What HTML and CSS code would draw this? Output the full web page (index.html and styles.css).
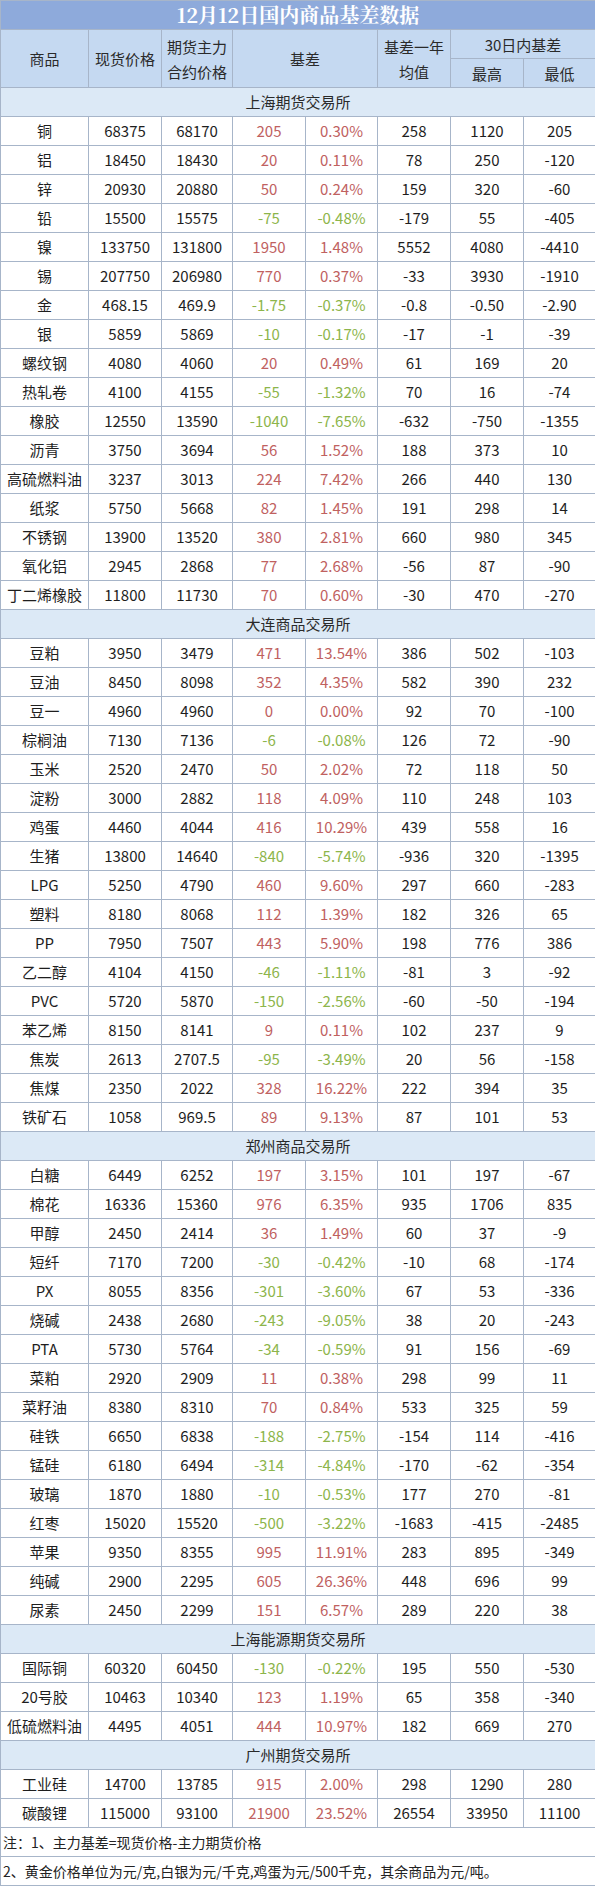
FILE: index.html
```html
<!DOCTYPE html>
<html lang="zh">
<head>
<meta charset="utf-8">
<title>12月12日国内商品基差数据</title>
<link rel="stylesheet" href="styles.css">
</head>
<body>
<table class="basis">
<colgroup>
<col class="c1"><col class="c2"><col class="c3"><col class="c4"><col class="c5"><col class="c6"><col class="c7"><col class="c8">
</colgroup>
<thead>
<tr class="title"><th colspan="8">12月12日国内商品基差数据</th></tr>
<tr class="head"><th rowspan="2">商品</th><th rowspan="2">现货价格</th><th rowspan="2">期货主力<br>合约价格</th><th rowspan="2" colspan="2">基差</th><th rowspan="2">基差一年<br>均值</th><th colspan="2">30日内基差</th></tr>
<tr class="head"><th>最高</th><th>最低</th></tr>
</thead>
<tbody>
<tr class="sec"><td colspan="8">上海期货交易所</td></tr>
<tr><td>铜</td><td>68375</td><td>68170</td><td class="u">205</td><td class="u">0.30%</td><td>258</td><td>1120</td><td>205</td></tr>
<tr><td>铝</td><td>18450</td><td>18430</td><td class="u">20</td><td class="u">0.11%</td><td>78</td><td>250</td><td>-120</td></tr>
<tr><td>锌</td><td>20930</td><td>20880</td><td class="u">50</td><td class="u">0.24%</td><td>159</td><td>320</td><td>-60</td></tr>
<tr><td>铅</td><td>15500</td><td>15575</td><td class="d">-75</td><td class="d">-0.48%</td><td>-179</td><td>55</td><td>-405</td></tr>
<tr><td>镍</td><td>133750</td><td>131800</td><td class="u">1950</td><td class="u">1.48%</td><td>5552</td><td>4080</td><td>-4410</td></tr>
<tr><td>锡</td><td>207750</td><td>206980</td><td class="u">770</td><td class="u">0.37%</td><td>-33</td><td>3930</td><td>-1910</td></tr>
<tr><td>金</td><td>468.15</td><td>469.9</td><td class="d">-1.75</td><td class="d">-0.37%</td><td>-0.8</td><td>-0.50</td><td>-2.90</td></tr>
<tr><td>银</td><td>5859</td><td>5869</td><td class="d">-10</td><td class="d">-0.17%</td><td>-17</td><td>-1</td><td>-39</td></tr>
<tr><td>螺纹钢</td><td>4080</td><td>4060</td><td class="u">20</td><td class="u">0.49%</td><td>61</td><td>169</td><td>20</td></tr>
<tr><td>热轧卷</td><td>4100</td><td>4155</td><td class="d">-55</td><td class="d">-1.32%</td><td>70</td><td>16</td><td>-74</td></tr>
<tr><td>橡胶</td><td>12550</td><td>13590</td><td class="d">-1040</td><td class="d">-7.65%</td><td>-632</td><td>-750</td><td>-1355</td></tr>
<tr><td>沥青</td><td>3750</td><td>3694</td><td class="u">56</td><td class="u">1.52%</td><td>188</td><td>373</td><td>10</td></tr>
<tr><td>高硫燃料油</td><td>3237</td><td>3013</td><td class="u">224</td><td class="u">7.42%</td><td>266</td><td>440</td><td>130</td></tr>
<tr><td>纸浆</td><td>5750</td><td>5668</td><td class="u">82</td><td class="u">1.45%</td><td>191</td><td>298</td><td>14</td></tr>
<tr><td>不锈钢</td><td>13900</td><td>13520</td><td class="u">380</td><td class="u">2.81%</td><td>660</td><td>980</td><td>345</td></tr>
<tr><td>氧化铝</td><td>2945</td><td>2868</td><td class="u">77</td><td class="u">2.68%</td><td>-56</td><td>87</td><td>-90</td></tr>
<tr><td>丁二烯橡胶</td><td>11800</td><td>11730</td><td class="u">70</td><td class="u">0.60%</td><td>-30</td><td>470</td><td>-270</td></tr>
<tr class="sec"><td colspan="8">大连商品交易所</td></tr>
<tr><td>豆粕</td><td>3950</td><td>3479</td><td class="u">471</td><td class="u">13.54%</td><td>386</td><td>502</td><td>-103</td></tr>
<tr><td>豆油</td><td>8450</td><td>8098</td><td class="u">352</td><td class="u">4.35%</td><td>582</td><td>390</td><td>232</td></tr>
<tr><td>豆一</td><td>4960</td><td>4960</td><td class="u">0</td><td class="u">0.00%</td><td>92</td><td>70</td><td>-100</td></tr>
<tr><td>棕榈油</td><td>7130</td><td>7136</td><td class="d">-6</td><td class="d">-0.08%</td><td>126</td><td>72</td><td>-90</td></tr>
<tr><td>玉米</td><td>2520</td><td>2470</td><td class="u">50</td><td class="u">2.02%</td><td>72</td><td>118</td><td>50</td></tr>
<tr><td>淀粉</td><td>3000</td><td>2882</td><td class="u">118</td><td class="u">4.09%</td><td>110</td><td>248</td><td>103</td></tr>
<tr><td>鸡蛋</td><td>4460</td><td>4044</td><td class="u">416</td><td class="u">10.29%</td><td>439</td><td>558</td><td>16</td></tr>
<tr><td>生猪</td><td>13800</td><td>14640</td><td class="d">-840</td><td class="d">-5.74%</td><td>-936</td><td>320</td><td>-1395</td></tr>
<tr><td>LPG</td><td>5250</td><td>4790</td><td class="u">460</td><td class="u">9.60%</td><td>297</td><td>660</td><td>-283</td></tr>
<tr><td>塑料</td><td>8180</td><td>8068</td><td class="u">112</td><td class="u">1.39%</td><td>182</td><td>326</td><td>65</td></tr>
<tr><td>PP</td><td>7950</td><td>7507</td><td class="u">443</td><td class="u">5.90%</td><td>198</td><td>776</td><td>386</td></tr>
<tr><td>乙二醇</td><td>4104</td><td>4150</td><td class="d">-46</td><td class="d">-1.11%</td><td>-81</td><td>3</td><td>-92</td></tr>
<tr><td>PVC</td><td>5720</td><td>5870</td><td class="d">-150</td><td class="d">-2.56%</td><td>-60</td><td>-50</td><td>-194</td></tr>
<tr><td>苯乙烯</td><td>8150</td><td>8141</td><td class="u">9</td><td class="u">0.11%</td><td>102</td><td>237</td><td>9</td></tr>
<tr><td>焦炭</td><td>2613</td><td>2707.5</td><td class="d">-95</td><td class="d">-3.49%</td><td>20</td><td>56</td><td>-158</td></tr>
<tr><td>焦煤</td><td>2350</td><td>2022</td><td class="u">328</td><td class="u">16.22%</td><td>222</td><td>394</td><td>35</td></tr>
<tr><td>铁矿石</td><td>1058</td><td>969.5</td><td class="u">89</td><td class="u">9.13%</td><td>87</td><td>101</td><td>53</td></tr>
<tr class="sec"><td colspan="8">郑州商品交易所</td></tr>
<tr><td>白糖</td><td>6449</td><td>6252</td><td class="u">197</td><td class="u">3.15%</td><td>101</td><td>197</td><td>-67</td></tr>
<tr><td>棉花</td><td>16336</td><td>15360</td><td class="u">976</td><td class="u">6.35%</td><td>935</td><td>1706</td><td>835</td></tr>
<tr><td>甲醇</td><td>2450</td><td>2414</td><td class="u">36</td><td class="u">1.49%</td><td>60</td><td>37</td><td>-9</td></tr>
<tr><td>短纤</td><td>7170</td><td>7200</td><td class="d">-30</td><td class="d">-0.42%</td><td>-10</td><td>68</td><td>-174</td></tr>
<tr><td>PX</td><td>8055</td><td>8356</td><td class="d">-301</td><td class="d">-3.60%</td><td>67</td><td>53</td><td>-336</td></tr>
<tr><td>烧碱</td><td>2438</td><td>2680</td><td class="d">-243</td><td class="d">-9.05%</td><td>38</td><td>20</td><td>-243</td></tr>
<tr><td>PTA</td><td>5730</td><td>5764</td><td class="d">-34</td><td class="d">-0.59%</td><td>91</td><td>156</td><td>-69</td></tr>
<tr><td>菜粕</td><td>2920</td><td>2909</td><td class="u">11</td><td class="u">0.38%</td><td>298</td><td>99</td><td>11</td></tr>
<tr><td>菜籽油</td><td>8380</td><td>8310</td><td class="u">70</td><td class="u">0.84%</td><td>533</td><td>325</td><td>59</td></tr>
<tr><td>硅铁</td><td>6650</td><td>6838</td><td class="d">-188</td><td class="d">-2.75%</td><td>-154</td><td>114</td><td>-416</td></tr>
<tr><td>锰硅</td><td>6180</td><td>6494</td><td class="d">-314</td><td class="d">-4.84%</td><td>-170</td><td>-62</td><td>-354</td></tr>
<tr><td>玻璃</td><td>1870</td><td>1880</td><td class="d">-10</td><td class="d">-0.53%</td><td>177</td><td>270</td><td>-81</td></tr>
<tr><td>红枣</td><td>15020</td><td>15520</td><td class="d">-500</td><td class="d">-3.22%</td><td>-1683</td><td>-415</td><td>-2485</td></tr>
<tr><td>苹果</td><td>9350</td><td>8355</td><td class="u">995</td><td class="u">11.91%</td><td>283</td><td>895</td><td>-349</td></tr>
<tr><td>纯碱</td><td>2900</td><td>2295</td><td class="u">605</td><td class="u">26.36%</td><td>448</td><td>696</td><td>99</td></tr>
<tr><td>尿素</td><td>2450</td><td>2299</td><td class="u">151</td><td class="u">6.57%</td><td>289</td><td>220</td><td>38</td></tr>
<tr class="sec"><td colspan="8">上海能源期货交易所</td></tr>
<tr><td>国际铜</td><td>60320</td><td>60450</td><td class="d">-130</td><td class="d">-0.22%</td><td>195</td><td>550</td><td>-530</td></tr>
<tr><td>20号胶</td><td>10463</td><td>10340</td><td class="u">123</td><td class="u">1.19%</td><td>65</td><td>358</td><td>-340</td></tr>
<tr><td>低硫燃料油</td><td>4495</td><td>4051</td><td class="u">444</td><td class="u">10.97%</td><td>182</td><td>669</td><td>270</td></tr>
<tr class="sec"><td colspan="8">广州期货交易所</td></tr>
<tr><td>工业硅</td><td>14700</td><td>13785</td><td class="u">915</td><td class="u">2.00%</td><td>298</td><td>1290</td><td>280</td></tr>
<tr><td>碳酸锂</td><td>115000</td><td>93100</td><td class="u">21900</td><td class="u">23.52%</td><td>26554</td><td>33950</td><td>11100</td></tr>
</tbody>
<tfoot>
<tr class="note"><td colspan="8">注：1、主力基差=现货价格-主力期货价格</td></tr>
<tr class="note"><td colspan="8">2、黄金价格单位为元/克,白银为元/千克,鸡蛋为元/500千克，其余商品为元/吨。</td></tr>
</tfoot>
</table>
</body>
</html>
```

FILE: styles.css
```css
html, body {
  margin: 0;
  padding: 0;
  background: #ffffff;
}

.basis {
  border-collapse: collapse;
  table-layout: fixed;
  width: 595px;
  font-family: "Noto Sans CJK SC", "Noto Sans", sans-serif;
  font-size: 15px;
  color: #1e1e1e;
}

.c1 { width: 88px; }
.c2 { width: 73px; }
.c3 { width: 71px; }
.c4 { width: 73px; }
.c5 { width: 72px; }
.c6 { width: 73px; }
.c7 { width: 73px; }
.c8 { width: 72px; }

.basis th,
.basis td {
  border: 1px solid #a7b5c9;
  padding: 0;
  height: 28px;
  text-align: center;
  vertical-align: middle;
  font-weight: normal;
  line-height: 18px;
  white-space: nowrap;
}

.title th {
  background: #8eaadb;
  color: #ffffff;
  font-family: "Noto Serif CJK SC", "Liberation Serif", "Noto Sans CJK SC", serif;
  font-weight: bold;
  font-size: 20px;
  letter-spacing: 0;
}

.head th {
  background: #c5d9f1;
  color: #2a2a2a;
  line-height: 25px;
}

.sec td {
  background: #dce9f6;
  color: #2a2a2a;
}

.u { color: #c0615f; }
.d { color: #8db54b; }

.note td {
  text-align: left;
  padding-left: 2px;
  font-size: 14px;
  color: #222222;
}
```
